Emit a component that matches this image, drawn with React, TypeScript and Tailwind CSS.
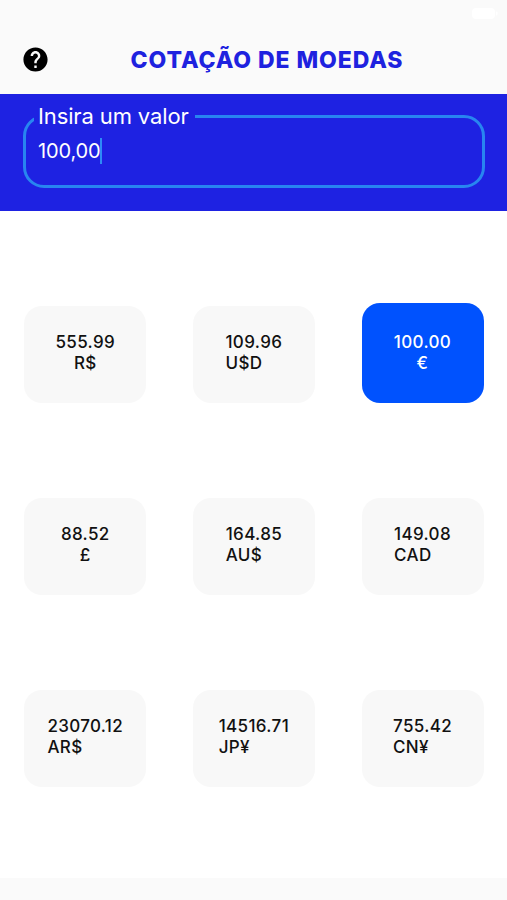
import { useState } from "react"
import { MdHelp } from "react-icons/md"
import { cva } from "class-variance-authority"

type Currency = { id: string; symbol: string; amount: string; centered?: boolean }

const currencies: Currency[] = [
  { id: "brl", symbol: "R$", amount: "555.99", centered: true },
  { id: "usd", symbol: "U$D", amount: "109.96" },
  { id: "eur", symbol: "€", amount: "100.00", centered: true },
  { id: "gbp", symbol: "£", amount: "88.52", centered: true },
  { id: "aud", symbol: "AU$", amount: "164.85" },
  { id: "cad", symbol: "CAD", amount: "149.08" },
  { id: "ars", symbol: "AR$", amount: "23070.12" },
  { id: "jpy", symbol: "JP¥", amount: "14516.71" },
  { id: "cny", symbol: "CN¥", amount: "755.42" },
]

const card = cva(
  "flex justify-center self-end rounded-[18px] text-[17px] leading-[21px] font-medium tracking-[0.35px]",
  {
    variants: {
      active: {
        true: "h-[100px] bg-[#0052fe] pt-[29px] text-white",
        false: "h-[97px] bg-[#f8f8f8] pt-[26px] text-[#111111]",
      },
    },
  }
)

function StatusBar() {
  return (
    <div className="flex h-[26px] justify-end pt-[8px] pr-[9px]">
      <svg width="26" height="11" viewBox="0 0 26 11" fill="#ffffff">
        <rect x="0" y="0" width="23" height="11" rx="4" />
        <rect x="24" y="3.5" width="1.5" height="4" rx="0.7" />
      </svg>
    </div>
  )
}

function Header() {
  return (
    <header className="h-[94px] bg-[#fafafa]">
      <StatusBar />
      <div className="flex h-[67px] items-center pl-[20.5px]">
        <button aria-label="Ajuda">
          <MdHelp className="size-[29px] text-black" />
        </button>
        <h1 className="mt-[2px] ml-[81px] text-[23px] font-extrabold tracking-[0.92px] whitespace-nowrap text-[#1e22df]">
          COTAÇÃO DE MOEDAS
        </h1>
      </div>
    </header>
  )
}

function AmountField({ value }: { value: string }) {
  return (
    <section className="h-[117px] bg-[#1e22e2] pt-[9px] pr-[22px] pl-[23px]">
      <fieldset className="h-[85px] rounded-[21px] border-[3px] border-[#2886f0] pl-[8px] text-white">
        <legend className="px-[4px] pr-[6px] text-[22px] leading-[26px] tracking-[-0.13px] whitespace-nowrap">
          Insira um valor
        </legend>
        <div className="flex items-center pt-[8px] pl-[4px]">
          <span className="text-[20px] leading-[28px] tracking-[-0.15px]">{value}</span>
          {/* caret */}
          <span className="h-[26px] w-[2px] bg-[#2e8bf7]" />
        </div>
      </fieldset>
    </section>
  )
}

export default function App() {
  const [selected, setSelected] = useState("eur")

  return (
    <div className="flex h-[900px] w-[507px] flex-col overflow-hidden bg-white font-['Inter',sans-serif]">
      <Header />
      <AmountField value="100,00" />
      <main className="grid flex-1 auto-rows-[100px] grid-cols-[122px_122px_122px] content-start justify-between gap-y-[92px] pt-[92px] pr-[23.5px] pl-[24.25px]">
        {currencies.map(({ id, symbol, amount, centered }) => (
          <button
            key={id}
            onClick={() => setSelected(id)}
            className={card({ active: selected === id })}
          >
            <span className={centered ? "text-center" : "text-left"}>
              {amount}
              <br />
              {symbol}
            </span>
          </button>
        ))}
      </main>
      <footer className="h-[22px] bg-[#fafafa]" />
    </div>
  )
}
